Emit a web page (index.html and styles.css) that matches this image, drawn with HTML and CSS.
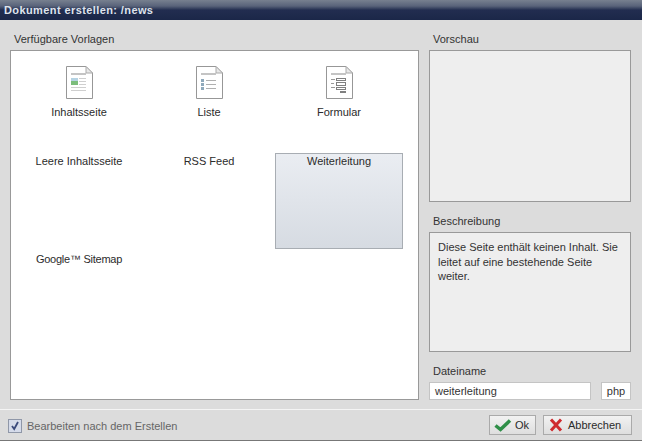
FILE: index.html
```
<!DOCTYPE html>
<html lang="de">
<head>
<meta charset="utf-8">
<title>Dokument erstellen</title>
<link rel="stylesheet" href="styles.css">
</head>
<body>
<div class="window">
  <header class="titlebar">Dokument erstellen: /news</header>
  <main class="content">
    <section class="left">
      <h2 class="label">Verfügbare Vorlagen</h2>
      <div class="templates">
        <div class="tpl">
          <svg class="doc" width="27" height="33" viewBox="0 0 27 33"><path d="M.5.5H20L26.5 7V32.5H.5Z" fill="#fff" stroke="#979797"/><path d="M20 .5V7H26.500Z" fill="#e8e8e8" stroke="#aaa"/><rect x="5" y="7" width="15" height="2" fill="#c4c4c4"/><rect x="5" y="12" width="7" height="5" fill="#b5d3e3"/><rect x="5" y="15" width="7" height="4" fill="#7cbd7c"/><path d="M13 12.500h7M13 15.500h7M13 18.500h7M5 21.500h15M5 24.500h15" stroke="#cfcfcf"/></svg>
          <span>Inhaltsseite</span>
        </div>
        <div class="tpl">
          <svg class="doc" width="27" height="33" viewBox="0 0 27 33"><path d="M.5.5H20L26.5 7V32.5H.5Z" fill="#fff" stroke="#979797"/><path d="M20 .5V7H26.500Z" fill="#e8e8e8" stroke="#aaa"/><rect x="5" y="7" width="15" height="2" fill="#c4c4c4"/><path d="M10 14.500h10M10 18.500h10M10 22.500h10" stroke="#b0b0b0"/><rect x="5" y="13" width="3" height="3" fill="#8fa9bb"/><rect x="5" y="17" width="3" height="3" fill="#8fa9bb"/><rect x="5" y="21" width="3" height="3" fill="#8fa9bb"/></svg>
          <span>Liste</span>
        </div>
        <div class="tpl">
          <svg class="doc" width="27" height="33" viewBox="0 0 27 33"><path d="M.5.5H20L26.5 7V32.5H.5Z" fill="#fff" stroke="#979797"/><path d="M20 .5V7H26.500Z" fill="#e8e8e8" stroke="#aaa"/><rect x="5" y="7" width="15" height="2" fill="#c4c4c4"/><path d="M5 13.500h4M5 17.500h3M5 21.500h4" stroke="#999"/><rect x="10.500" y="12.500" width="9" height="2" fill="#fff" stroke="#808080"/><rect x="10.500" y="16.500" width="9" height="3" fill="#fff" stroke="#808080"/><rect x="10.500" y="21.500" width="9" height="2" fill="#fff" stroke="#808080"/><rect x="14" y="25" width="6" height="2" fill="#808080"/></svg>
          <span>Formular</span>
        </div>
        <div class="tpl"><span>Leere Inhaltsseite</span></div>
        <div class="tpl"><span>RSS Feed</span></div>
        <div class="tpl selected"><span>Weiterleitung</span></div>
        <div class="tpl"><span class="google">Google™ Sitemap</span></div>
      </div>
    </section>
    <aside class="right">
      <h2 class="label">Vorschau</h2>
      <div class="preview"></div>
      <h2 class="label desc-label">Beschreibung</h2>
      <div class="desc">Diese Seite enthält keinen Inhalt. Sie leitet auf eine bestehende Seite weiter.</div>
      <h2 class="label name-label">Dateiname</h2>
      <div class="name-row">
        <div class="field name">weiterleitung</div>
        <div class="field ext">php</div>
      </div>
    </aside>
  </main>
  <footer class="footer">
    <label class="check">
      <svg width="14" height="14" viewBox="0 0 14 14"><rect x=".5" y=".5" width="13" height="13" fill="#d5dbea" stroke="#8f97a8"/><path d="M4 7L6.200 10L10 3" fill="none" stroke="#3a4a7c" stroke-width="1.800"/></svg>
      <span>Bearbeiten nach dem Erstellen</span>
    </label>
    <div class="buttons">
      <button class="btn ok"><svg width="18" height="14" viewBox="0 0 18 14"><path d="M1.500 7.500L6.500 11.500L16 2.500" fill="none" stroke="#2f8f48" stroke-width="3.500"/></svg>Ok</button>
      <button class="btn cancel"><svg width="14" height="14" viewBox="0 0 14 14"><path d="M2 1.500L12 12.500M12 1.500L2 12.500" fill="none" stroke="#cf2a2e" stroke-width="3"/></svg>Abbrechen</button>
    </div>
  </footer>
</div>
</body>
</html>
```
FILE: styles.css
```
* { box-sizing: border-box; }
html, body { margin: 0; padding: 0; }
body { width: 645px; height: 442px; background: #fff; font-family: "Liberation Sans", Arial, sans-serif; font-size: 11px; color: #2b2b2b; overflow: hidden; }
.window { width: 642px; height: 441px; background: #dcdcdc; display: flex; flex-direction: column; border-bottom: 1px solid #777; }
.titlebar { height: 20px; flex: none; padding: 4px 0 0 4px; color: #dfe3ec; font-weight: bold; font-size: 11px; line-height: 13px; letter-spacing: .4px; background: linear-gradient(#77808f 0, #59637a 30%, #222d50 50%, #1b2748 100%); }
.content { flex: 1; display: flex; gap: 10px; padding: 13px 10px 0; }
.left { width: 409px; display: flex; flex-direction: column; }
.right { width: 202px; display: flex; flex-direction: column; }
.label { margin: 0; font-size: 11px; font-weight: normal; line-height: 13px; height: 17px; padding-left: 4px; color: #333; }
.templates { height: 350px; background: #fff; border: 1px solid #999; padding: 3px; display: grid; grid-template-columns: repeat(3, 130px); grid-auto-rows: 98px; align-content: start; }
.tpl { margin: 1px; border: 1px solid transparent; display: flex; flex-direction: column; align-items: center; padding-top: 1px; line-height: 13px; }
.tpl .doc { margin: 9px 0 7px; }
.tpl.selected { background: linear-gradient(#eaedf2, #d6dbe2); border-color: #a8adb3; }
.google { letter-spacing: -.25px; }
.preview { height: 152px; background: #eee; border: 1px solid #999; }
.desc-label { margin-top: 13px; }
.desc { height: 120px; background: #eee; border: 1px solid #999; padding: 7px 8px; line-height: 14.500px; color: #333; }
.name-label { margin-top: 13px; height: 17px; }
.name-row { display: flex; justify-content: space-between; }
.field { height: 18px; background: #fff; border: 1px solid #c4c4c4; line-height: 16px; padding: 0 5px; color: #333; }
.name { width: 162px; }
.ext { width: 30px; text-align: center; padding: 0; }
.footer { height: 31px; flex: none; margin-top: 9px; border-top: 1px solid #f4f4f4; display: flex; justify-content: space-between; align-items: center; padding: 2px 10px 0 8px; }
.check { display: flex; align-items: center; gap: 5px; color: #666; }
.buttons { display: flex; gap: 7px; margin-top: -2px; }
.btn { height: 20px; display: flex; align-items: center; gap: 3px; background: linear-gradient(#f2f2f2, #dedede); border: 1px solid #aaa; padding: 0 4px; font: 11px "Liberation Sans", Arial, sans-serif; color: #2b2b2b; }
.cancel { gap: 5px; padding: 0 5px; }
.ok { width: 47px; }
.cancel { width: 89px; }
```
